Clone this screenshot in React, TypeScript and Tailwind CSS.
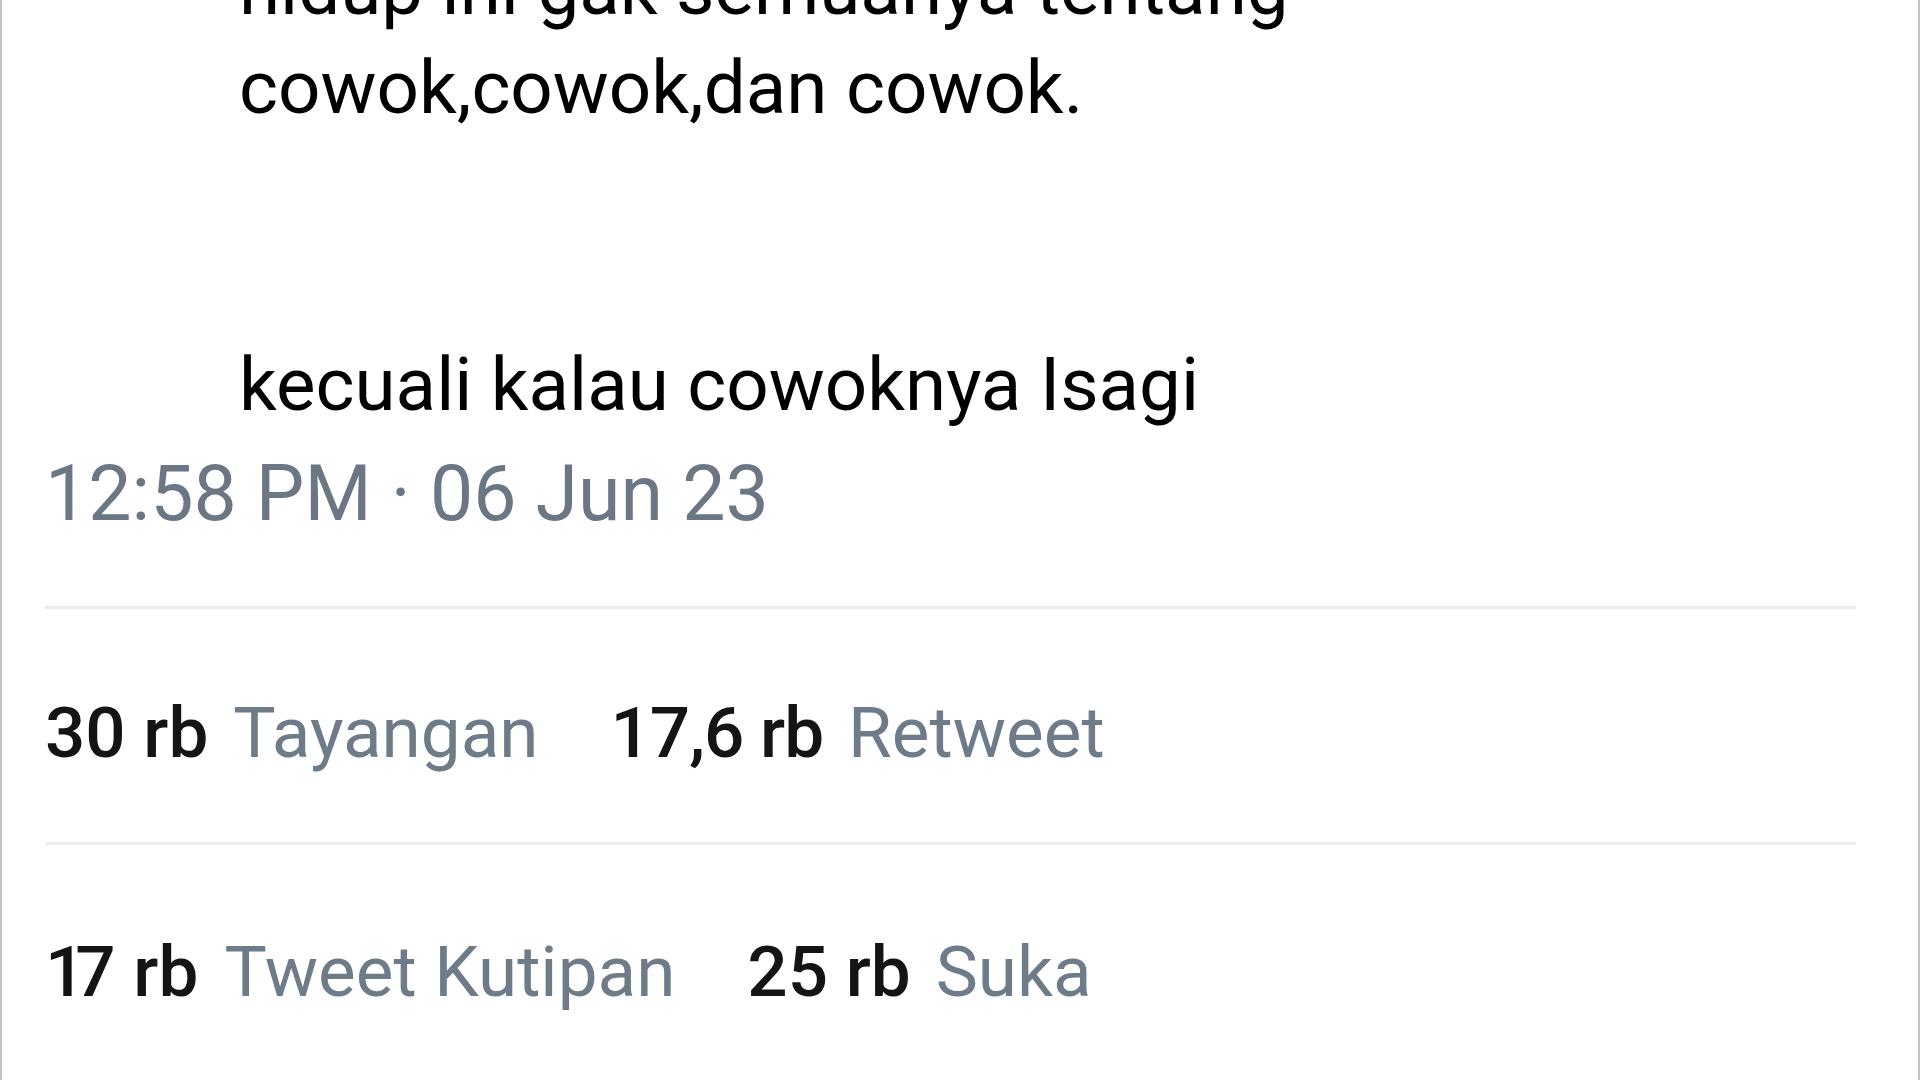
export default function App() {
  return (
    <div className="h-[1080px] w-full overflow-hidden border-x-2 border-[#c2c2c2] bg-white font-['Roboto',_'Liberation_Sans',_sans-serif]">
      <div className="pl-[43px] pr-[62px]">
        {/* tweet body */}
        <div className="-mt-[61px] whitespace-pre-line pl-[194px] text-[74.5px] leading-[99px] text-black">
          {'hidup ini gak semuanya tentang\ncowok,cowok,dan cowok.\n\n\nkecuali kalau cowoknya Isagi'}
        </div>

        {/* timestamp */}
        <div className="mt-[22px] text-[77px] leading-[77px] text-[#6b7784]">12:58 PM · 06 Jun 23</div>

        <div className="mt-[73px] h-[3px] bg-[#ebebeb]" />

        <div className="flex items-baseline pb-[74px] pt-[88px] text-[71px] leading-[71px]">
          <span className="font-medium text-[#141414]">30 rb</span>
          <span className="ml-[25px] text-[#6e7b89]">Tayangan</span>
          <span className="ml-[72px] font-medium tracking-[-1px] text-[#141414]">17,6 rb</span>
          <span className="ml-[25px] text-[#6e7b89]">Retweet</span>
        </div>

        <div className="h-[3px] bg-[#ebebeb]" />

        <div className="flex items-baseline pt-[91px] text-[71px] leading-[71px]">
          <span className="font-medium text-[#141414]">
            <span className="tracking-[-10px]">1</span>7 rb
          </span>
          <span className="ml-[26px] text-[#6e7b89]">Tweet Kutipan</span>
          <span className="ml-[72px] font-medium text-[#141414]">25 rb</span>
          <span className="ml-[25px] text-[#6e7b89]">Suka</span>
        </div>
      </div>
    </div>
  )
}
